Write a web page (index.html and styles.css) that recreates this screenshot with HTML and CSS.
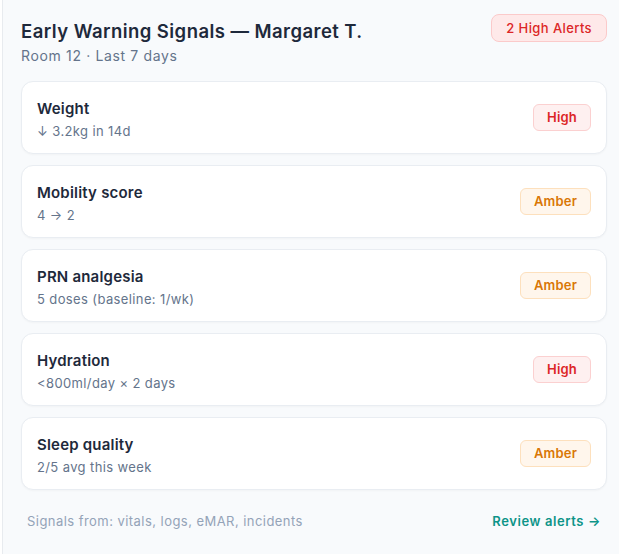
FILE: index.html
```html
<!DOCTYPE html>
<html>
<head>
<meta charset="utf-8">
<link rel="stylesheet" href="styles.css">
</head>
<body>
<div class="panel">
  <div class="header">
    <div class="head-text">
      <h1 class="title">Early Warning Signals — Margaret T.</h1>
      <div class="subtitle">Room 12 · Last 7 days</div>
    </div>
    <span class="alert-badge">2 High Alerts</span>
  </div>
  <div class="list">
    <div class="card">
      <div class="card-text">
        <div class="card-title">Weight</div>
        <div class="card-sub">↓ 3.2kg in 14d</div>
      </div>
      <span class="tag tag-high">High</span>
    </div>
    <div class="card">
      <div class="card-text">
        <div class="card-title">Mobility score</div>
        <div class="card-sub">4 → 2</div>
      </div>
      <span class="tag tag-amber">Amber</span>
    </div>
    <div class="card">
      <div class="card-text">
        <div class="card-title">PRN analgesia</div>
        <div class="card-sub">5 doses (baseline: 1/wk)</div>
      </div>
      <span class="tag tag-amber">Amber</span>
    </div>
    <div class="card">
      <div class="card-text">
        <div class="card-title">Hydration</div>
        <div class="card-sub">&lt;800ml/day × 2 days</div>
      </div>
      <span class="tag tag-high">High</span>
    </div>
    <div class="card">
      <div class="card-text">
        <div class="card-title">Sleep quality</div>
        <div class="card-sub">2/5 avg this week</div>
      </div>
      <span class="tag tag-amber">Amber</span>
    </div>
  </div>
  <div class="footer">
    <span class="sources">Signals from: vitals, logs, eMAR, incidents</span>
    <a class="review" href="#">Review alerts →</a>
  </div>
</div>
</body>
</html>
```
FILE: styles.css
```css
html, body {
  margin: 0;
  padding: 0;
  background: #ffffff;
}
body {
  font-family: Inter, "Noto Sans", sans-serif;
  -webkit-font-smoothing: antialiased;
}
.panel {
  margin-left: 2px;
  border-left: 1px solid #e8ebef;
  background: #f8fafc;
  min-height: 554px;
  box-sizing: border-box;
  padding: 14px 12px 0 18px;
}
.header {
  display: flex;
  justify-content: space-between;
  align-items: flex-start;
}
.title {
  margin: 5px 0 0 0;
  font-size: 18.5px;
  line-height: 24px;
  font-weight: 600;
  letter-spacing: 0.44px;
  color: #1e293b;
}
.subtitle {
  margin-top: 4px;
  font-size: 14px;
  line-height: 18px;
  letter-spacing: 0.65px;
  color: #64748b;
}
.alert-badge {
  display: inline-block;
  height: 28px;
  box-sizing: border-box;
  padding: 0 14px;
  line-height: 26px;
  font-size: 13px;
  font-weight: 500;
  letter-spacing: 0.4px;
  color: #dc2626;
  background: #fee9e9;
  border: 1px solid #fbcaca;
  border-radius: 8px;
}
.list {
  margin-top: 16px;
  display: flex;
  flex-direction: column;
  gap: 11px;
}
.card {
  display: flex;
  align-items: center;
  justify-content: space-between;
  height: 73px;
  box-sizing: border-box;
  padding: 0 15px 0 15px;
  background: #ffffff;
  border: 1px solid #e9edf2;
  border-radius: 12px;
  box-shadow: 0 1px 2px rgba(15, 23, 42, 0.03);
}
.card-text {
  padding-top: 3px;
}
.card-title {
  font-size: 15px;
  line-height: 20px;
  font-weight: 600;
  letter-spacing: 0.2px;
  color: #1e293b;
}
.card-sub {
  margin-top: 3px;
  font-size: 13px;
  line-height: 18px;
  letter-spacing: 0.38px;
  color: #64748b;
}
.tag {
  display: inline-block;
  height: 27px;
  box-sizing: border-box;
  padding: 0 13px;
  line-height: 25px;
  font-size: 13px;
  font-weight: 600;
  letter-spacing: 0.2px;
  border-radius: 6px;
  border: 1px solid;
}
.tag-high {
  color: #dc2626;
  background: #fef0f0;
  border-color: #fbd0d0;
}
.tag-amber {
  color: #d97706;
  background: #fff6ec;
  border-color: #fde0bd;
}
.footer {
  display: flex;
  justify-content: space-between;
  align-items: center;
  padding: 22px 6px 0 6px;
  font-size: 13px;
  line-height: 18px;
}
.sources {
  color: #94a3b8;
  letter-spacing: 0.45px;
}
.review {
  color: #0d9488;
  font-weight: 600;
  letter-spacing: 0.6px;
  text-decoration: none;
}
```
